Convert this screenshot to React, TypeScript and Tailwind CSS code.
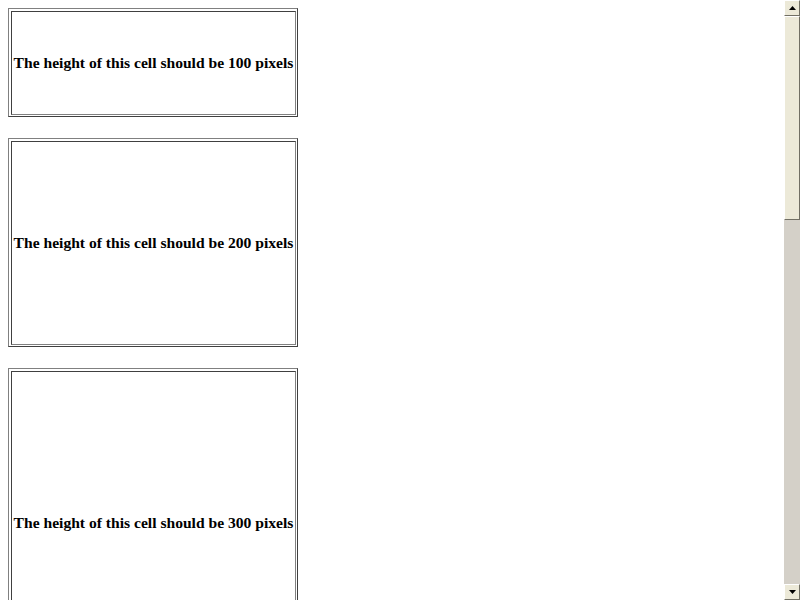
import React from "react";

function Cell({ h, label }: { h: string; label: string }) {
  return (
    <div className="border border-t-[#808080] border-l-[#808080] border-r-[#404040] border-b-[#404040] pt-[2px] pl-[2px] pr-[1px] pb-[1px] w-[290px] mb-[21px]">
      <div className="border border-t-[#404040] border-l-[#404040] border-r-[#808080] border-b-[#808080] p-[1px]">
        <div
          className={`${h} flex items-center justify-center whitespace-nowrap font-bold text-[15.6px] text-black leading-none`}
          style={{ fontFamily: '"Liberation Serif", "Times New Roman", serif' }}
        >
          {label}
        </div>
      </div>
    </div>
  );
}

export default function App() {
  return (
    <div className="w-[800px] h-[600px] flex overflow-hidden bg-white">
      <div className="flex-1 overflow-hidden pt-[8px] pl-[8px]">
        <Cell h="h-[100px]" label="The height of this cell should be 100 pixels" />
        <Cell h="h-[200px]" label="The height of this cell should be 200 pixels" />
        <Cell h="h-[300px]" label="The height of this cell should be 300 pixels" />
      </div>
      <div className="w-[16px] h-[600px] flex flex-col bg-[#d4d0c8]">
        <div className="h-[16px] w-[16px] bg-[#ece9d8] border border-t-white border-l-white border-r-[#716f64] border-b-[#716f64] flex items-center justify-center">
          <svg width="7" height="4" viewBox="0 0 7 4"><path d="M3.5 0 L7 4 L0 4 Z" fill="#000" /></svg>
        </div>
        <div className="h-[204px] w-[16px] bg-[#ece9d8] border border-t-white border-l-white border-r-[#716f64] border-b-[#716f64]" />
        <div className="flex-1" />
        <div className="h-[16px] w-[16px] bg-[#ece9d8] border border-t-white border-l-white border-r-[#716f64] border-b-[#716f64] flex items-center justify-center">
          <svg width="7" height="4" viewBox="0 0 7 4"><path d="M0 0 L7 0 L3.5 4 Z" fill="#000" /></svg>
        </div>
      </div>
    </div>
  );
}
